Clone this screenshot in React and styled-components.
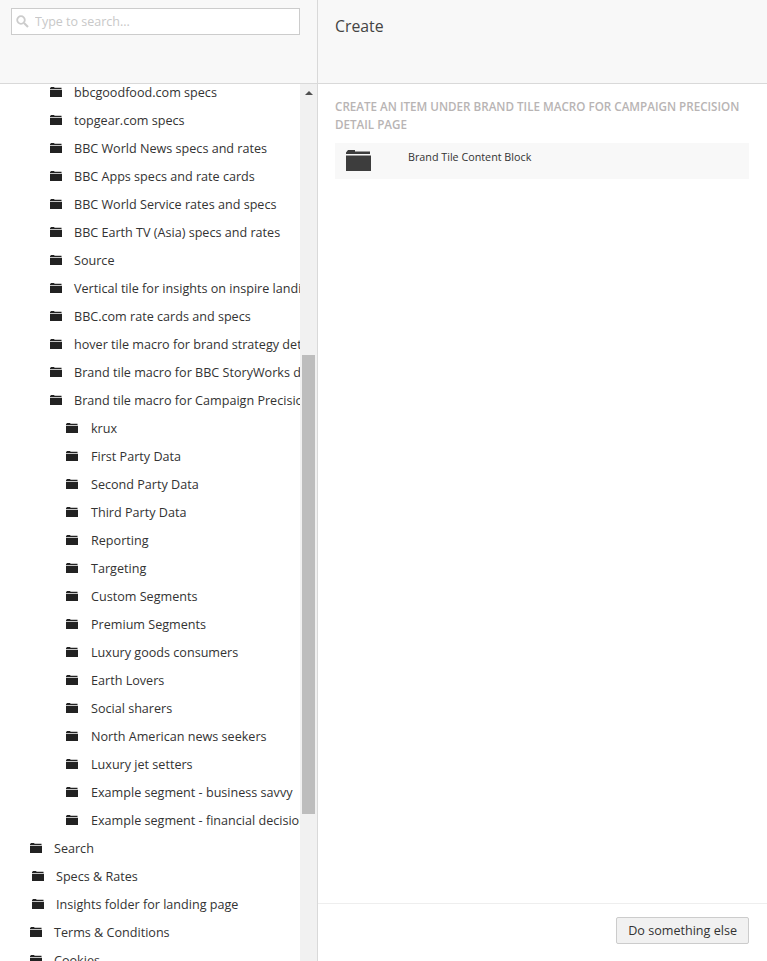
import React from 'react'
import styled, { createGlobalStyle } from 'styled-components'

const GlobalStyle = createGlobalStyle`
    html, body{
        margin: 0;
        padding: 0;
        height: 100%;
        background: #fff;
    }
    body{
        font-family: "Open Sans", "Liberation Sans", sans-serif;
        font-size: 13px;
        color: #333;
    }
`

const topItems = [
    'bbcgoodfood.com specs',
    'topgear.com specs',
    'BBC World News specs and rates',
    'BBC Apps specs and rate cards',
    'BBC World Service rates and specs',
    'BBC Earth TV (Asia) specs and rates',
    'Source',
    'Vertical tile for insights on inspire landing page',
    'BBC.com rate cards and specs',
    'hover tile macro for brand strategy detail page',
    'Brand tile macro for BBC StoryWorks detail page',
    'Brand tile macro for Campaign Precision detail page',
]

const subItems = [
    'krux',
    'First Party Data',
    'Second Party Data',
    'Third Party Data',
    'Reporting',
    'Targeting',
    'Custom Segments',
    'Premium Segments',
    'Luxury goods consumers',
    'Earth Lovers',
    'Social sharers',
    'North American news seekers',
    'Luxury jet setters',
    'Example segment - business savvy',
    'Example segment - financial decision makers',
]

const rootItems = [
    { label: 'Search', indent: 30 },
    { label: 'Specs & Rates', indent: 32 },
    { label: 'Insights folder for landing page', indent: 32 },
    { label: 'Terms & Conditions', indent: 30 },
    { label: 'Cookies', indent: 30 },
]

function Folder({ size = 12, color = '#222' }) {
    return <svg width={size} height={size * 0.84} viewBox="0 0 25 21" fill={color}>
        <path d="M2 0h7v1.500h15V4H0V2.500zM0 5.500h25V21H0z" />
    </svg>
}

function TreeRow({ label, indent, gap = 12 }) {
    return <Row $indent={indent} $gap={gap}>
        <Folder />
        <RowLabel>{label}</RowLabel>
    </Row>
}

export default function App() {
    return <Page>
        <GlobalStyle />
        <Sidebar>
            <SideHeader>
                <SearchBox>
                    <svg width="13" height="13" viewBox="0 0 13 13" fill="none" stroke="#ccc" strokeWidth="1.800">
                        <circle cx="5" cy="5" r="3.800" />
                        <path d="M8 8l4 4" strokeWidth="2.200" />
                    </svg>
                    <SearchInput placeholder="Type to search..." readOnly />
                </SearchBox>
            </SideHeader>
            <TreeArea>
                <TreeList>
                    {topItems.map(item => <TreeRow key={item} label={item} indent={50} />)}
                    {subItems.map(item => <TreeRow key={item} label={item} indent={66} gap={13} />)}
                    {rootItems.map(item => <TreeRow key={item.label} label={item.label} indent={item.indent} />)}
                </TreeList>
                <ScrollTrack>
                    <ScrollArrow />
                    <ScrollThumb />
                </ScrollTrack>
            </TreeArea>
        </Sidebar>
        <Main>
            <MainHeader>Create</MainHeader>
            <MainBody>
                <Heading>Create an item under Brand tile macro for Campaign Precision detail page</Heading>
                <ContentType>
                    <TypeIcon><Folder size={25} color="#3d3d3d" /></TypeIcon>
                    <TypeName>Brand Tile Content Block</TypeName>
                </ContentType>
            </MainBody>
            <MainFooter>
                <FooterButton>Do something else</FooterButton>
            </MainFooter>
        </Main>
    </Page>
}

const Page = styled.div`
    display: flex;
    width: 767px;
    height: 961px;
    overflow: hidden;
`

const Sidebar = styled.aside`
    display: flex;
    flex-direction: column;
    width: 317px;
    flex: none;
    border-right: 1px solid #d9d9d9;
`

const SideHeader = styled.div`
    flex: none;
    box-sizing: border-box;
    height: 84px;
    padding: 8px 17px 0 11px;
    background: #f8f8f8;
    border-bottom: 1px solid #d9d9d9;
`

const SearchBox = styled.div`
    display: flex;
    align-items: center;
    gap: 6px;
    box-sizing: border-box;
    height: 27px;
    padding-left: 4px;
    background: #fff;
    border: 1px solid #ccc;
`

const SearchInput = styled.input`
    flex: 1;
    min-width: 0;
    border: 0;
    padding: 0;
    outline: none;
    background: transparent;
    font-family: inherit;
    font-size: 12.5px;
    &::placeholder{
        color: #c8c8c8;
        opacity: 1;
    }
`

const TreeArea = styled.div`
    flex: 1;
    min-height: 0;
    display: flex;
    overflow: hidden;
`

const TreeList = styled.div`
    flex: 1;
    min-width: 0;
    margin-top: -6px;
`

const Row = styled.div`
    display: flex;
    align-items: center;
    gap: ${props => props.$gap}px;
    height: 28px;
    padding-left: ${props => props.$indent}px;
    white-space: nowrap;
    overflow: hidden;
    svg{
        flex: none;
    }
`

const RowLabel = styled.span`
    font-size: 12.6px;
    color: #333;
`

const ScrollTrack = styled.div`
    display: flex;
    flex-direction: column;
    width: 17px;
    flex: none;
    background: #f1f1f1;
`

const ScrollArrow = styled.div`
    align-self: center;
    width: 0;
    height: 0;
    margin-top: 7px;
    border-left: 4px solid transparent;
    border-right: 4px solid transparent;
    border-bottom: 4px solid #505050;
`

const ScrollThumb = styled.div`
    width: 13px;
    height: 459px;
    margin: 260px 0 0 2px;
    background: #bdbdbd;
`

const Main = styled.main`
    flex: 1;
    min-width: 0;
    display: flex;
    flex-direction: column;
`

const MainHeader = styled.div`
    height: 84px;
    flex: none;
    box-sizing: border-box;
    padding: 15px 17px 0;
    background: #f8f8f8;
    border-bottom: 1px solid #d9d9d9;
    font-size: 15.8px;
    color: #444;
`

const MainBody = styled.div`
    flex: 1;
    padding: 14px 18px 0 17px;
`

const Heading = styled.h4`
    margin: 0 0 9px;
    font-size: 11.65px;
    line-height: 18px;
    font-weight: 600;
    text-transform: uppercase;
    color: #b8b4b4;
`

const ContentType = styled.div`
    display: flex;
    align-items: flex-start;
    height: 36px;
    background: #f8f8f8;
`

const TypeIcon = styled.div`
    width: 73px;
    flex: none;
    padding: 7px 0 0 11px;
    box-sizing: border-box;
`

const TypeName = styled.div`
    font-size: 10.75px;
    line-height: 28px;
    color: #333;
`

const MainFooter = styled.div`
    display: flex;
    justify-content: flex-end;
    align-items: flex-start;
    height: 58px;
    flex: none;
    box-sizing: border-box;
    padding: 13px 18px 0 0;
    border-top: 1px solid #eee;
`

const FooterButton = styled.button`
    height: 27px;
    padding: 0 11px;
    font-family: inherit;
    font-size: 12.6px;
    color: #333;
    background: #f1f1f1;
    border: 1px solid #ccc;
    border-radius: 2px;
`
